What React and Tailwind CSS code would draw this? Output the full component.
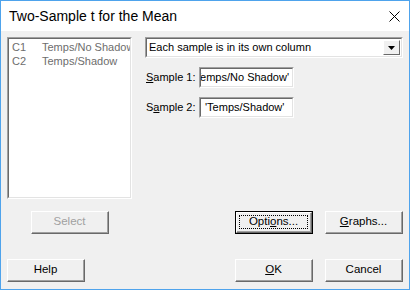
import React from 'react';

const font = { fontFamily: '"Liberation Sans", Arial, sans-serif' };

const Btn = ({ children, disabled, focused }) => {
    const face = (
        <div className="w-full h-full border-t border-l border-t-white border-l-white border-b border-r border-b-[#696969] border-r-[#696969] flex items-center justify-center">
            <div className={`w-full h-full flex items-center justify-center border-b border-r border-b-[#a0a0a0] border-r-[#a0a0a0] ${disabled ? 'text-[#a0a0a0]' : 'text-black'}`}>
                {focused ? (
                    <span className="w-[calc(100%-4px)] h-[calc(100%-4px)] border border-dotted border-black flex items-center justify-center">
                        {children}
                    </span>
                ) : children}
            </div>
        </div>
    );
    return (
        <div className={`w-[78px] h-[23px] shrink-0 bg-[#f0f0f0] text-[11.5px] whitespace-nowrap ${focused ? 'border border-black' : ''}`}>
            {face}
        </div>
    );
};

const Sunken = ({ className, children }) => (
    <div className={`shrink-0 border-t border-l border-t-[#a0a0a0] border-l-[#a0a0a0] border-b border-r border-b-white border-r-white ${className}`}>
        <div className="w-full h-full border-t border-l border-t-[#696969] border-l-[#696969] border-b border-r border-b-[#e3e3e3] border-r-[#e3e3e3] bg-white overflow-hidden">
            {children}
        </div>
    </div>
);

export default function App() {
    return (
        <div className="w-[410px] h-[290px] border border-[#4ea3ec] bg-[#f0f0f0] flex flex-col" style={font}>
            {/* title bar */}
            <div className="h-[30px] shrink-0 bg-white flex items-center justify-between pl-[8px] pr-[9px]">
                <span className="text-[14px] text-black">Two-Sample t for the Mean</span>
                <svg width="11" height="11" viewBox="0 0 11 11">
                    <path d="M0.5 0.5 L10.5 10.5 M10.5 0.5 L0.5 10.5" stroke="#000" strokeWidth="1" />
                </svg>
            </div>

            <div className="flex-1 flex flex-col pt-[6px] px-[6px]">
                <div className="flex gap-[13px]">
                    <Sunken className="w-[125px] h-[162px]">
                        <div className="pl-[3px] pt-[1px] text-[11px] leading-[14px] text-[#6d6d6d]">
                            <div className="flex whitespace-nowrap"><span className="w-[30px] shrink-0">C1</span><span>Temps/No Shadow</span></div>
                            <div className="flex whitespace-nowrap"><span className="w-[30px] shrink-0">C2</span><span>Temps/Shadow</span></div>
                        </div>
                    </Sunken>

                    <div className="flex flex-col w-[258px] shrink-0">
                        <Sunken className="h-[21px] w-full">
                            <div className="flex items-center h-full pl-[2px] pr-[1px] text-[11px] whitespace-nowrap">
                                <span className="flex-1">Each sample is in its own column</span>
                                <div className="w-[17px] h-[15px] bg-[#f0f0f0] border-t border-l border-white border-b border-r border-b-[#696969] border-r-[#696969] flex items-center justify-center">
                                    <svg width="7" height="4" viewBox="0 0 7 4"><path d="M0 0 H7 L3.5 4 Z" fill="#000" /></svg>
                                </div>
                            </div>
                        </Sunken>

                        <div className="flex items-center mt-[9px] text-[11px] whitespace-nowrap">
                            <span className="w-[54px] shrink-0 pl-[1px]"><u>S</u>ample 1:</span>
                            <Sunken className="w-[95px] h-[21px]">
                                <div className="h-full flex items-center justify-end pr-[3px]">'Temps/No Shadow'</div>
                            </Sunken>
                        </div>
                        <div className="flex items-center mt-[9px] text-[11px] whitespace-nowrap">
                            <span className="w-[54px] shrink-0 pl-[1px]">S<u>a</u>mple 2:</span>
                            <Sunken className="w-[95px] h-[21px]">
                                <div className="h-full flex items-center pl-[4px]">'Temps/Shadow'</div>
                            </Sunken>
                        </div>
                    </div>
                </div>

                <div className="flex mt-[12px]">
                    <div className="ml-[24px]"><Btn disabled>Select</Btn></div>
                    <div className="ml-[126px]"><Btn focused><span>Opti<u>o</u>ns...</span></Btn></div>
                    <div className="ml-[12px]"><Btn><span><u>G</u>raphs...</span></Btn></div>
                </div>

                <div className="flex mt-[25px]">
                    <Btn>Help</Btn>
                    <div className="ml-[150px]"><Btn><span><u>O</u>K</span></Btn></div>
                    <div className="ml-[12px]"><Btn>Cancel</Btn></div>
                </div>
            </div>
        </div>
    );
}
